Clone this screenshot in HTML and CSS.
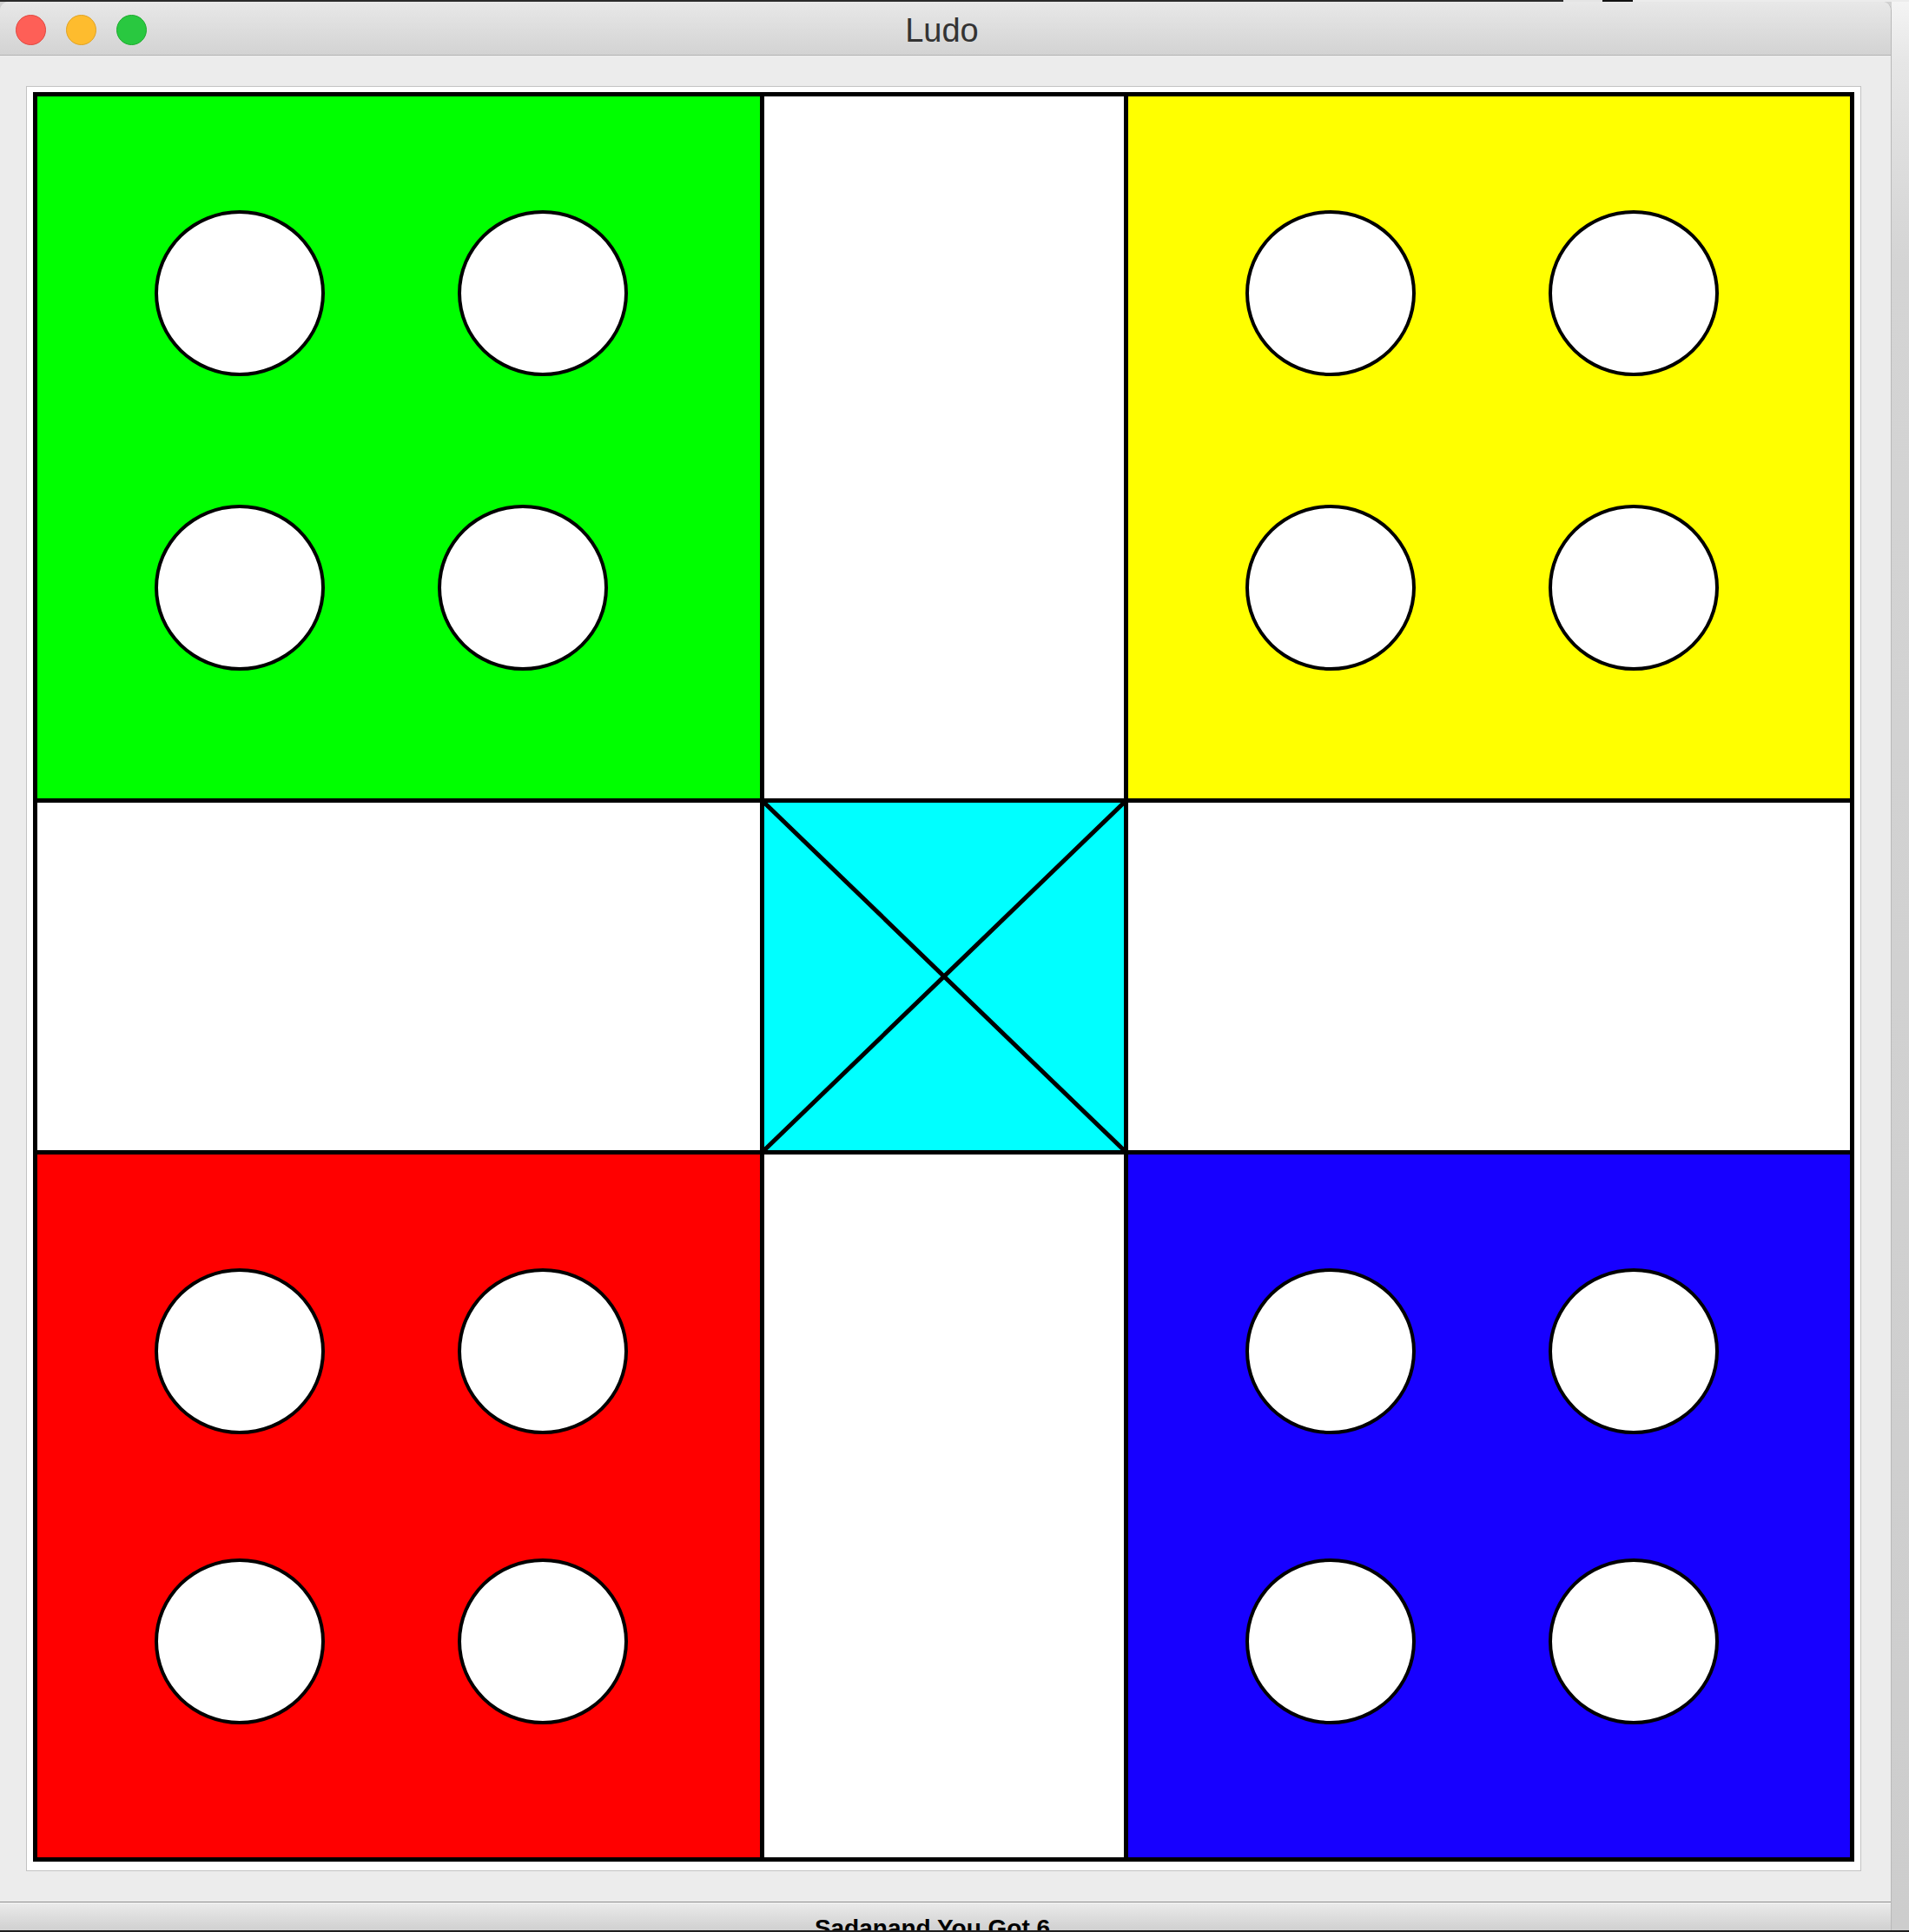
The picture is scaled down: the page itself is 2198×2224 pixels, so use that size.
FILE: index.html
```html
<!DOCTYPE html>
<html lang="en">
<head>
<meta charset="utf-8">
<title>Ludo</title>
<link rel="stylesheet" href="styles.css">
</head>
<body>
<div class="screen">
  <div class="topstrip">
    <span class="ts-dark"></span><span class="ts-light"></span><span class="ts-black"></span><span class="ts-rest"></span>
  </div>
  <div class="main">
    <div class="window">
      <div class="titlebar">
        <div class="lights">
          <span class="light l-red"></span>
          <span class="light l-yellow"></span>
          <span class="light l-green"></span>
        </div>
        <div class="title">Ludo</div>
      </div>
      <div class="content">
        <div class="panel">
          <div class="board">
            <div class="home green">
              <span class="tok t1"></span><span class="tok t2"></span>
              <span class="tok t3"></span><span class="tok t4 shift"></span>
            </div>
            <div class="lane"></div>
            <div class="home yellow">
              <span class="tok t1"></span><span class="tok t2"></span>
              <span class="tok t3"></span><span class="tok t4"></span>
            </div>
            <div class="lane"></div>
            <div class="center">
              <svg class="cross" viewBox="0 0 414 400" preserveAspectRatio="none">
                <line x1="0" y1="0" x2="414" y2="400"/>
                <line x1="414" y1="0" x2="0" y2="400"/>
              </svg>
            </div>
            <div class="lane"></div>
            <div class="home red low">
              <span class="tok t1"></span><span class="tok t2"></span>
              <span class="tok t3"></span><span class="tok t4"></span>
            </div>
            <div class="lane"></div>
            <div class="home blue low">
              <span class="tok t1"></span><span class="tok t2"></span>
              <span class="tok t3"></span><span class="tok t4"></span>
            </div>
          </div>
        </div>
      </div>
      <div class="status"><span class="status-text">Sadanand You Got 6</span></div>
    </div>
    <div class="side"></div>
  </div>
  <div class="bottomstrip"></div>
</div>
</body>
</html>
```
FILE: styles.css
```css
* { box-sizing: border-box; }
html, body { margin: 0; padding: 0; }
body {
  background: #d2d2d2;
  font-family: "Liberation Sans", Arial, sans-serif;
}
.screen {
  width: 2198px;
  height: 2224px;
  display: flex;
  flex-direction: column;
  overflow: hidden;
  background: #d2d2d2;
}
.topstrip {
  height: 2px;
  display: flex;
  flex: none;
}
.ts-dark { width: 1800px; background: #2a2a2a; }
.ts-light { width: 45px; background: #e4e4e4; }
.ts-black { width: 35px; background: #111; }
.ts-rest { flex: 1; background: #ececec; }

.main {
  height: 2220px;
  display: flex;
  flex: none;
}
.window {
  width: 2178px;
  height: 2220px;
  display: flex;
  flex-direction: column;
  background: #ececec;
  border-right: 1px solid #b9b9b9;
  border-radius: 10px 10px 0 0;
  overflow: hidden;
  flex: none;
}
.side {
  flex: 1;
  background: linear-gradient(to bottom, #f4f4f4 0, #e6e6e6 70px, #d4d4d4 300px, #cdcdcd 100%);
}

.titlebar {
  position: relative;
  height: 62px;
  flex: none;
  background: linear-gradient(to bottom, #e8e8e8, #d3d3d3);
  border-bottom: 1px solid #b3b3b3;
  display: flex;
  justify-content: center;
  padding: 14px 8px 0 0;
}
.lights {
  position: absolute;
  left: 18px;
  top: 15px;
  display: flex;
  gap: 23px;
}
.light {
  width: 35px;
  height: 35px;
  border-radius: 50%;
  display: block;
}
.l-red { background: #fe5f57; border: 1px solid #e1473f; }
.l-yellow { background: #febc2e; border: 1px solid #e0a324; }
.l-green { background: #29c840; border: 1px solid #1eab2e; }
.title {
  font-size: 38px;
  line-height: 38px;
  color: #333;
}

.content {
  flex: none;
  height: 2125px;
  padding: 35px 0 35px 30px;
}
.panel {
  width: 2113px;
  height: 2055px;
  background: #fff;
  border: 1px solid #c3c3c3;
  padding: 6px 7px 10px 7px;
}
.board {
  width: 2097px;
  height: 2037px;
  border: 5px solid #000;
  background: #000;
  display: grid;
  grid-template-columns: 832px 414px 831px;
  grid-template-rows: 808px 400px 809px;
  gap: 5px;
}
.lane { background: #fff; }
.home { position: relative; }
.green { background: #00ff00; }
.yellow { background: #ffff00; }
.red { background: #ff0000; }
.blue { background: #1700ff; }
.center { background: #00ffff; }
.cross { display: block; width: 100%; height: 100%; }
.cross line { stroke: #000; stroke-width: 5; vector-effect: non-scaling-stroke; }

.tok {
  position: absolute;
  width: 196px;
  height: 191px;
  border: 4px solid #000;
  border-radius: 50%;
  background: #fff;
}
.t1 { left: 135px; top: 131px; }
.t2 { left: 484px; top: 131px; }
.t3 { left: 135px; top: 470px; }
.t4 { left: 484px; top: 470px; }
.t4.shift { left: 461px; }
.low .t3, .low .t4 { top: 465px; }

.status {
  flex: none;
  height: 33px;
  border-top: 1px solid #8c8c8c;
  box-shadow: inset 0 1px 0 #f6f6f6;
  background: linear-gradient(to bottom, #ebebeb, #d0d0d0);
  display: flex;
  justify-content: center;
  padding: 16px 30px 0 0;
  overflow: hidden;
}
.status-text {
  font-weight: bold;
  font-size: 28px;
  line-height: 28px;
  color: #000;
  white-space: nowrap;
}
.bottomstrip {
  height: 2px;
  flex: none;
  background: #1e1e1e;
}
```
